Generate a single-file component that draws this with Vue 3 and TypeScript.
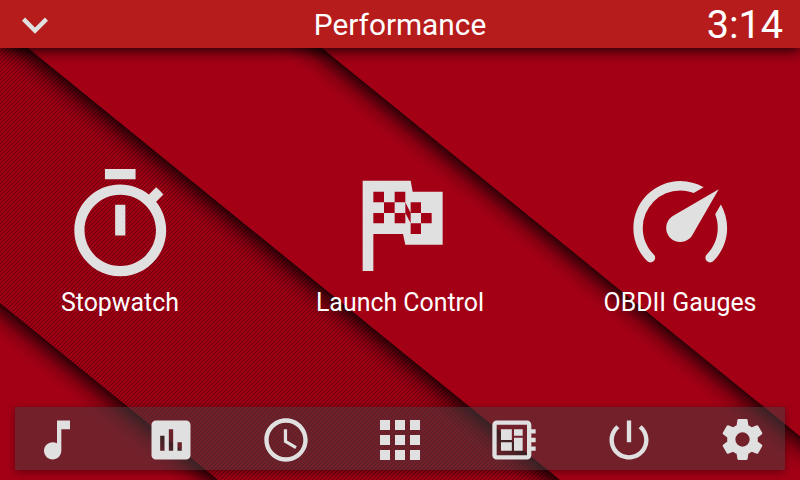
<script setup lang="ts">
interface NavItem { name: string; d: string; size: number }

const navItems: NavItem[] = [
  { name: 'Music', size: 52, d: 'M12 3v10.55c-.59-.34-1.27-.55-2-.55-2.21 0-4 1.79-4 4s1.79 4 4 4 4-1.79 4-4V7h4V3h-6z' },
  { name: 'Statistics', size: 52, d: 'M19 3H5c-1.1 0-2 .9-2 2v14c0 1.1.9 2 2 2h14c1.1 0 2-.9 2-2V5c0-1.1-.9-2-2-2zM9 17H7v-7h2v7zm4 0h-2V7h2v10zm4 0h-2v-4h2v4z' },
  { name: 'Clock', size: 52, d: 'M11.99 2C6.47 2 2 6.48 2 12s4.47 10 9.99 10C17.52 22 22 17.52 22 12S17.52 2 11.99 2zM12 20c-4.42 0-8-3.58-8-8s3.58-8 8-8 8 3.58 8 8-3.58 8-8 8zm.5-13H11v6l5.25 3.15.75-1.23-4.5-2.67z' },
  { name: 'Apps', size: 60, d: 'M4 8h4V4H4v4zm6 12h4v-4h-4v4zm-6 0h4v-4H4v4zm0-6h4v-4H4v4zm6 0h4v-4h-4v4zm6-10v4h4V4h-4zm-6 4h4V4h-4v4zm6 6h4v-4h-4v4zm0 6h4v-4h-4v4z' },
  { name: 'Board', size: 52, d: 'M22 9V7h-2V5c0-1.1-.9-2-2-2H4c-1.1 0-2 .9-2 2v14c0 1.1.9 2 2 2h14c1.1 0 2-.9 2-2v-2h2v-2h-2v-2h2v-2h-2V9h2zm-4 10H4V5h14v14zM6 13h5v4H6zm6-6h4v3h-4zM6 7h5v5H6zm6 4h4v6h-4z' },
  { name: 'Power', size: 52, d: 'M13 3h-2v10h2V3zm4.83 2.17l-1.42 1.42C17.99 7.86 19 9.81 19 12c0 3.87-3.13 7-7 7s-7-3.13-7-7c0-2.19 1.01-4.14 2.58-5.42L6.17 5.17C4.23 6.82 3 9.26 3 12c0 4.97 4.03 9 9 9s9-4.03 9-9c0-2.74-1.23-5.18-3.17-6.83z' },
  { name: 'Settings', size: 49, d: 'M12,15.5A3.5,3.5 0 0,1 8.5,12A3.5,3.5 0 0,1 12,8.5A3.5,3.5 0 0,1 15.5,12A3.5,3.5 0 0,1 12,15.5M19.43,12.97C19.47,12.65 19.5,12.33 19.5,12C19.5,11.67 19.47,11.34 19.43,11L21.54,9.37C21.73,9.22 21.78,8.95 21.66,8.73L19.66,5.27C19.54,5.05 19.27,4.96 19.05,5.05L16.56,6.05C16.04,5.66 15.5,5.32 14.87,5.07L14.5,2.42C14.46,2.18 14.25,2 14,2H10C9.75,2 9.54,2.18 9.5,2.42L9.13,5.07C8.5,5.32 7.96,5.66 7.44,6.05L4.95,5.05C4.73,4.96 4.46,5.05 4.34,5.27L2.34,8.73C2.21,8.95 2.27,9.22 2.46,9.37L4.57,11C4.53,11.34 4.5,11.67 4.5,12C4.5,12.33 4.53,12.65 4.57,12.97L2.46,14.63C2.27,14.78 2.21,15.05 2.34,15.27L4.34,18.73C4.46,18.95 4.73,19.03 4.95,18.95L7.44,17.94C7.96,18.34 8.5,18.68 9.13,18.93L9.5,21.58C9.54,21.82 9.75,22 10,22H14C14.25,22 14.46,21.82 14.5,21.58L14.87,18.93C15.5,18.67 16.04,18.34 16.56,17.94L19.05,18.95C19.27,19.03 19.54,18.95 19.66,18.73L21.66,15.27C21.78,15.05 21.73,14.78 21.54,14.63L19.43,12.97Z' },
]
</script>

<template>
  <div class="screen">
    <svg class="wallpaper" viewBox="0 0 800 480" aria-hidden="true">
      <defs>
        <pattern id="weave" width="4" height="4" patternUnits="userSpaceOnUse">
          <path d="M0 3h1v1H0zM1 2h1v1H1zM2 1h1v1H2zM3 0h1v1H3z" fill="#000" fill-opacity=".32" />
          <path d="M0 0h1v1H0zM1 3h1v1H1zM2 2h1v1H2zM3 1h1v1H3z" fill="#000" fill-opacity=".12" />
        </pattern>
        <linearGradient id="fold" x1="0" y1="0" x2="-18.9" y2="23.3" gradientUnits="userSpaceOnUse">
          <stop offset="0" stop-color="#000" stop-opacity=".72" />
          <stop offset=".2" stop-color="#000" stop-opacity=".48" />
          <stop offset=".5" stop-color="#000" stop-opacity=".18" />
          <stop offset=".8" stop-color="#000" stop-opacity=".04" />
          <stop offset="1" stop-color="#000" stop-opacity="0" />
        </linearGradient>
      </defs>
      <rect width="800" height="480" fill="#a30015" />
      <path d="M0 25.3L560 480H217L0 303z" fill="url(#weave)" />
      <path transform="translate(28 48)" d="M-100-81.2L600 487.2H500L-100 0z" fill="url(#fold)" />
      <path transform="translate(322 48)" d="M-100-81.2L600 487.2H500L-100 0z" fill="url(#fold)" />
      <path transform="translate(0 303)" d="M-100-81.2L600 487.2H500L-100 0z" fill="url(#fold)" />
    </svg>

    <header class="topbar">
      <svg class="chevron" viewBox="0 0 24 24"><path d="M16.59 8.59L12 13.17 7.41 8.59 6 10l6 6 6-6z" /></svg>
      <h1 class="title">Performance</h1>
      <time class="time">3:14</time>
    </header>

    <main class="tiles">
      <button class="tile">
        <svg class="glyph timer" viewBox="0 0 24 24"><path d="M15 1H9v2h6V1zm-4 13h2V8h-2v6zm8.03-6.61l1.42-1.42c-.43-.51-.9-.99-1.41-1.41l-1.42 1.42C16.07 4.74 14.12 4 12 4c-4.97 0-9 4.03-9 9s4.02 9 9 9 9-4.03 9-9c0-2.12-.74-4.07-1.97-5.61zM12 20c-3.87 0-7-3.13-7-7s3.13-7 7-7 7 3.13 7 7-3.13 7-7 7z" /></svg>
        <span class="label">Stopwatch</span>
      </button>
      <button class="tile">
        <svg class="glyph flag" viewBox="90 12 360 360"><path fill-rule="evenodd" d="M158 62H302L308 95H398V254H286L279 222H190V333H158zM190 95V127H222V95zM254 95V127H286V95zM222 127V159H254V127zM190 159V190H222V159zM254 159V190H286V159zM286 127V159L302 190V159zM302 127V159H333V127zM333 159V190H365V159zM302 190V222H333V190z" /></svg>
        <span class="label">Launch Control</span>
      </button>
      <button class="tile">
        <svg class="glyph gauge" viewBox="0 0 24 24"><path d="M12,16A3,3 0 0,1 9,13C9,11.88 9.61,10.9 10.5,10.39L20.21,4.77L14.68,14.35C14.18,15.33 13.17,16 12,16M12,3C13.81,3 15.5,3.5 16.97,4.32L14.87,5.53C14,5.19 13,5 12,5A8,8 0 0,0 4,13C4,15.21 4.89,17.21 6.34,18.65H6.35C6.74,19.04 6.74,19.67 6.35,20.06C5.96,20.45 5.32,20.45 4.93,20.07V20.07C3.12,18.26 2,15.76 2,13A10,10 0 0,1 12,3M22,13C22,15.76 20.88,18.26 19.07,20.07V20.07C18.68,20.45 18.05,20.45 17.66,20.06C17.27,19.67 17.27,19.04 17.66,18.65V18.65C19.11,17.2 20,15.21 20,13C20,12 19.81,11 19.46,10.1L20.67,8C21.5,9.5 22,11.18 22,13Z" /></svg>
        <span class="label">OBDII Gauges</span>
      </button>
    </main>

    <nav class="dock">
      <button v-for="item in navItems" :key="item.name" class="dock-item">
        <svg class="dock-icon" :width="item.size" :height="item.size" viewBox="0 0 24 24"><path :d="item.d" /></svg>
      </button>
    </nav>
  </div>
</template>

<style>
body { margin: 0; overflow: hidden; }
</style>

<style scoped>
.screen {
  position: relative;
  display: flex;
  flex-direction: column;
  width: 800px;
  height: 480px;
  overflow: hidden;
  font-family: Roboto, sans-serif;
  color: #fff;
  isolation: isolate;
}
.wallpaper { position: absolute; inset: 0; width: 100%; height: 100%; z-index: -1; }
svg { flex: none; fill: #e0e0e0; }
button { border: 0; padding: 0; background: none; color: inherit; font: inherit; }
.topbar {
  box-sizing: border-box;
  display: grid;
  grid-template-columns: 1fr auto 1fr;
  grid-template-rows: 48px;
  align-items: center;
  height: 48px;
  padding: 1px 17px 0 9px;
  background: #b71c1c;
  box-shadow: 0 2px 13px rgba(0, 0, 0, .9);
}
.chevron { width: 52px; height: 52px; margin: -2px 0; }
.title { margin: 0 0 0 8px; font-size: 29.8px; font-weight: 400; line-height: 48px; }
.time { justify-self: end; font-size: 39.6px; line-height: 48px; }
.tiles {
  display: grid;
  grid-template-columns: repeat(3, 240px);
  justify-content: space-between;
  height: 359px;
}
.tile {
  display: flex;
  flex-direction: column;
  align-items: center;
  justify-content: flex-start;
  padding-top: 115px;
}
.glyph { width: 122.5px; height: 122.5px; margin: .5px 0 1px; }
.flag { width: 120px; height: 120px; margin: 1px 0 3px; }
.gauge { width: 112.5px; height: 112.5px; margin: 4px 0 7.5px; }
.label { font-size: 24.9px; line-height: 32px; white-space: nowrap; }
.dock {
  box-sizing: border-box;
  display: flex;
  justify-content: space-between;
  align-items: center;
  height: 63px;
  margin: 0 15px;
  padding: 2px 16px 0;
  position: relative;
  background: rgba(66, 66, 66, .5);
}
/* The glow stays outside the translucent panel so the wallpaper shows through unshaded */
.dock::before {
  content: "";
  position: absolute;
  inset: 0;
  box-shadow: 0 2px 8px rgba(0, 0, 0, .4);
}
.dock-item { display: flex; align-items: center; justify-content: center; width: 52px; height: 52px; }
</style>
